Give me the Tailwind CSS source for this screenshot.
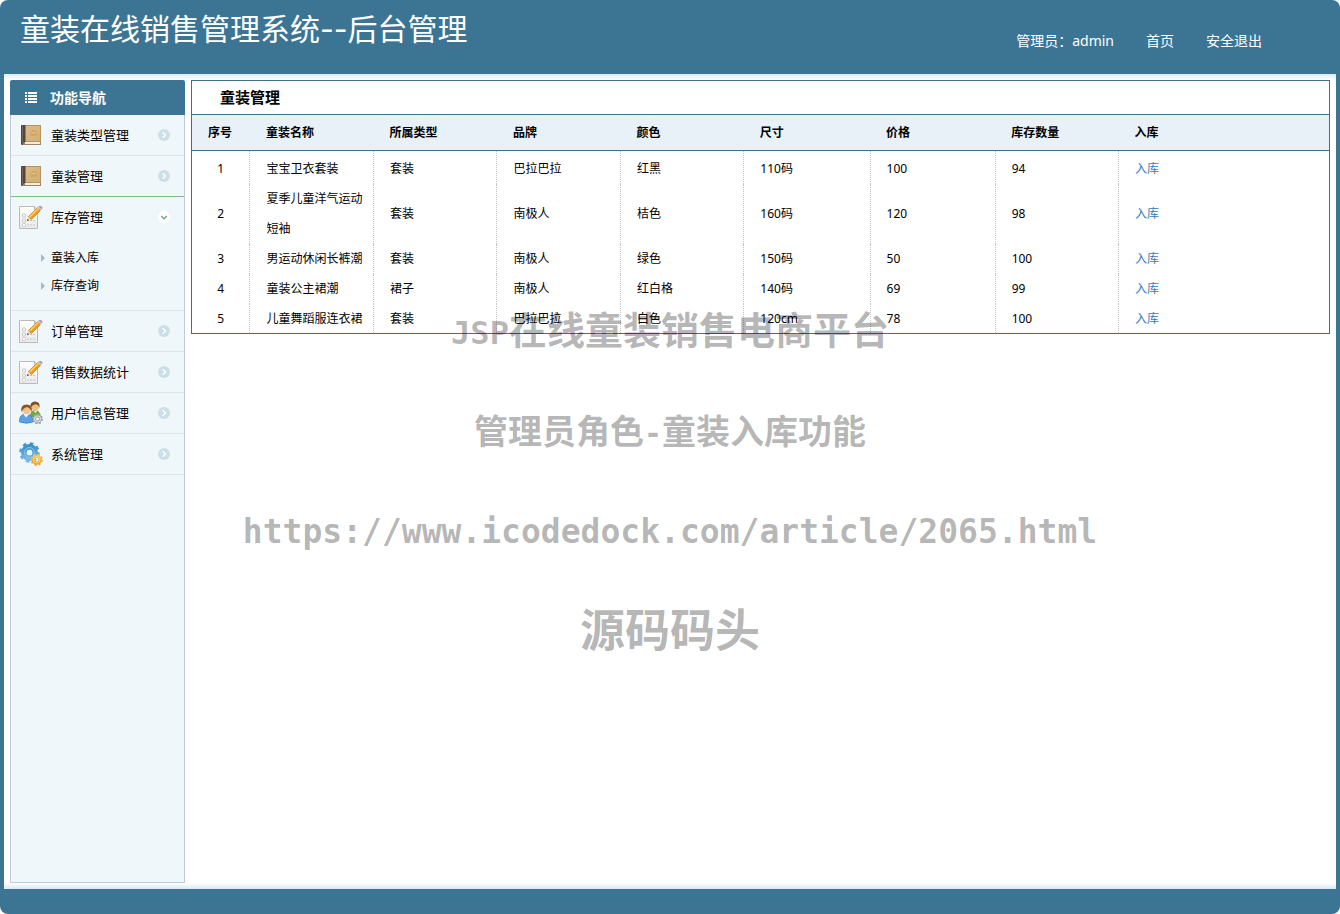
<!DOCTYPE html>
<html lang="zh-CN">
<head>
<meta charset="utf-8">
<title>童装在线销售管理系统--后台管理</title>
<script src="https://cdn.jsdelivr.net/npm/@tailwindcss/browser@4"></script>
</head>
<body class="relative bg-white font-['Noto_Sans','Noto_Sans_CJK_SC',sans-serif] text-black">
<svg class="absolute size-0" aria-hidden="true">
  <defs>
    <linearGradient id="cover" x1="0" y1="0" x2="1" y2="1"><stop offset="0" stop-color="#dcbd88"/><stop offset="1" stop-color="#d3ae76"/></linearGradient>
    <linearGradient id="paper" x1="0" y1="0" x2="0" y2="1"><stop offset="0" stop-color="#fff"/><stop offset="1" stop-color="#e9e9e9"/></linearGradient>
    <linearGradient id="blue" x1="0" y1="0" x2="0" y2="1"><stop offset="0" stop-color="#3f93cd"/><stop offset="1" stop-color="#74b6e4"/></linearGradient>
    <linearGradient id="gold" x1="0" y1="0" x2="0" y2="1"><stop offset="0" stop-color="#f7c250"/><stop offset="1" stop-color="#e9a02c"/></linearGradient>
  </defs>
  <symbol id="book" viewBox="0 0 24 24">
    <path d="M3 2h19v20H3z" fill="#9a8468"/>
    <path d="M6 18.500h15V21H6z" fill="#f1ebe0"/>
    <path d="M6 2h16v17H6z" fill="#b9935f"/>
    <path d="M6 3h15v15H6z" fill="url(#cover)"/>
    <path d="M2 3q0-1 1-1h3.500v17q-2 0-2.500 1l-.5 2H3q-1 0-1-1z" fill="#54473f"/>
    <path d="M3.500 3v17" stroke="#74645b"/>
    <path d="M11 9l2-2h3l2 1v4l-2 1h-4l-1-2z" fill="#d0a767"/><path d="M12 9l3 1 2-1" stroke="#e3c692" fill="none"/>
  </symbol>
  <symbol id="note" viewBox="0 0 24 24">
    <path d="M.5 1.500h15l3 3v19H.5z" fill="url(#paper)" stroke="#bababa"/>
    <path d="M15.500 1.500v3h3" fill="#ddd" stroke="#bababa"/>
    <g fill="#fff" stroke="#c2c2c2"><rect x="3.500" y="9" width="3" height="3" rx="1"/><rect x="3.500" y="14" width="3" height="3" rx="1"/><rect x="3.500" y="18.500" width="3" height="3" rx="1"/></g>
    <path d="M8 15.500h8M8 20h8" stroke="#c4c4c4" stroke-dasharray="2 1"/>
    <path d="M8 16l1.500-4.500 3 3z" fill="#f0d6a4"/><path d="M8 16l.6-2 1.400 1.300z" fill="#333"/>
    <path d="M9.500 11.500L18.500 2.500l3 3-9 9z" fill="#f09a1e" stroke="#b97618" stroke-width=".6"/>
    <path d="M10.500 12.200l9-9" stroke="#ffd468" stroke-width="1.400"/>
    <path d="M18.500 2.500l1-1 3 3-1 1z" fill="#c8c8ce"/><path d="M19.500 1.500q1.500-1.500 3.300 0 1.500 1.500-.3 3z" fill="#b697bd"/>
  </symbol>
  <symbol id="gear" viewBox="0 0 24 24">
    <circle cx="12" cy="12" r="9.800" fill="none" stroke-width="4" stroke-dasharray="3.850 3.847"/>
    <circle cx="12" cy="12" r="6.500" fill="none" stroke-width="6.500"/>
  </symbol>
  <symbol id="users" viewBox="0 0 24 24">
    <path d="M11 16q0-7 5-7t6 7z" fill="#71a842"/><path d="M14.500 9.500l2 2.500 2-2.500z" fill="#e8f1dc"/><circle cx="16" cy="5.500" r="4" fill="#efbd82"/><path d="M11.500 7q-1-6.500 4.500-6.500T20.500 7q-1-3.500-4-3.800Q13 4 11.500 7z" fill="#7b5123"/>
    <path d="M.5 21q-.5-8 6.500-8t7 8q-6 2.500-13.500 0z" fill="#5aa2e6" stroke="#2d70b6" stroke-width=".6"/><path d="M4.500 13l2.500 3.500 3-3.500z" fill="#fff"/>
    <circle cx="7.500" cy="9" r="4.300" fill="#f2c28a"/><path d="M2.500 11Q1 3.500 7.500 3.500T12.500 11q-1-4-4.500-5Q4 7 2.500 11z" fill="#8a5422"/>
    <svg x="13" y="12.500" width="11" height="11" stroke="#9da2a6"><use href="#gear"/></svg>
    <circle cx="18.500" cy="18" r="3" fill="none" stroke="#d9dcde" stroke-width="1.200"/>
  </symbol>
  <symbol id="gears" viewBox="0 0 24 24">
    <svg x="0" y="0" width="21" height="21" stroke="url(#blue)"><use href="#gear"/></svg>
    <circle cx="10.500" cy="10.500" r="5" fill="none" stroke="#8cc4ec" stroke-width="1"/>
    <svg x="11.500" y="11.500" width="12.500" height="12.500" stroke="url(#gold)"><use href="#gear"/></svg>
    <circle cx="17.750" cy="17.750" r="3.200" fill="none" stroke="#fbdb8b" stroke-width="1"/>
  </symbol>
  <symbol id="go" viewBox="0 0 12 12"><circle cx="6" cy="6" r="6" fill="#cbdfe9"/><path d="M4.700 3.200L7.500 6 4.700 8.800" fill="none" stroke="#fff" stroke-width="1.500"/></symbol>
  <symbol id="open" viewBox="0 0 12 12"><circle cx="6" cy="6" r="6" fill="#fff"/><path d="M3.200 5L6 7.800 8.800 5" fill="none" stroke="#6bb176" stroke-width="1.500"/></symbol>
</svg>

<div class="flex min-h-screen flex-col overflow-hidden rounded-lg bg-[#3c7593]">
  <header class="flex h-[74px] items-start justify-between pr-[78px] pl-5 text-white">
    <h1 class="pt-[9px] text-[30px] leading-10">童装在线销售管理系统<span class="font-[Inter]">--</span>后台管理</h1>
    <nav class="flex gap-8 pt-[31px] text-sm leading-5">
      <span>管理员：admin</span><a href="#">首页</a><a href="#">安全退出</a>
    </nav>
  </header>

  <div class="mx-1 flex flex-1 bg-white">
    <div class="flex min-w-0 flex-1 gap-1.5 bg-[linear-gradient(#deebf4,#fff_6px,#fff_calc(100%-6px),#d8e9f1)] p-1.5">
      <aside class="flex w-[175px] shrink-0 flex-col">
        <h2 class="flex h-[35px] shrink-0 items-center rounded-t-xs bg-[#3c7593] pl-[15px] text-[14px] font-bold text-white">
          <svg class="mr-[13px] size-3" viewBox="0 0 12 12" fill="#fff"><path d="M0 0h2v2H0zM3 0h9v2H3zM0 3h2v2H0zM3 3h9v2H3zM0 6h2v2H0zM3 6h9v2H3zM0 9h2v2H0zM3 9h9v2H3z"/></svg>功能导航
        </h2>
        <ul class="flex-1 border border-t-0 border-[#bccdd9] bg-[#f0f7fb] text-[13px] leading-5">
          <li class="border-b border-[#d8e5ed]"><a href="#" class="flex h-10 items-center pr-3.5 pl-2"><svg class="mr-2 size-6"><use href="#book"/></svg><span class="flex-1">童装类型管理</span><svg class="size-3"><use href="#go"/></svg></a></li>
          <li class="border-b border-[#7fb98a]"><a href="#" class="flex h-10 items-center pr-3.5 pl-2"><svg class="mr-2 size-6"><use href="#book"/></svg><span class="flex-1">童装管理</span><svg class="size-3"><use href="#go"/></svg></a></li>
          <li class="border-b border-[#d8e5ed]">
            <a href="#" class="flex h-10 items-center pr-3.5 pl-2"><svg class="mr-2 size-6"><use href="#note"/></svg><span class="flex-1">库存管理</span><svg class="size-3"><use href="#open"/></svg></a>
            <ul class="pt-[7px] pb-2.5 text-xs">
              <li><a href="#" class="flex h-7 items-center pl-[30px]"><svg class="mr-1.5 h-2 w-1" viewBox="0 0 4 8"><path d="M0 0l4 4-4 4z" fill="#a3bac8"/></svg>童装入库</a></li>
              <li><a href="#" class="flex h-7 items-center pl-[30px]"><svg class="mr-1.5 h-2 w-1" viewBox="0 0 4 8"><path d="M0 0l4 4-4 4z" fill="#a3bac8"/></svg>库存查询</a></li>
            </ul>
          </li>
          <li class="border-b border-[#d8e5ed]"><a href="#" class="flex h-10 items-center pr-3.5 pl-2"><svg class="mr-2 size-6"><use href="#note"/></svg><span class="flex-1">订单管理</span><svg class="size-3"><use href="#go"/></svg></a></li>
          <li class="border-b border-[#d8e5ed]"><a href="#" class="flex h-10 items-center pr-3.5 pl-2"><svg class="mr-2 size-6"><use href="#note"/></svg><span class="flex-1">销售数据统计</span><svg class="size-3"><use href="#go"/></svg></a></li>
          <li class="border-b border-[#d8e5ed]"><a href="#" class="flex h-10 items-center pr-3.5 pl-2"><svg class="mr-2 size-6"><use href="#users"/></svg><span class="flex-1">用户信息管理</span><svg class="size-3"><use href="#go"/></svg></a></li>
          <li class="border-b border-[#d8e5ed]"><a href="#" class="flex h-10 items-center pr-3.5 pl-2"><svg class="mr-2 size-6"><use href="#gears"/></svg><span class="flex-1">系统管理</span><svg class="size-3"><use href="#go"/></svg></a></li>
        </ul>
      </aside>

      <main class="min-w-0 flex-1">
        <section class="border border-[#3f6f89] bg-white">
          <h2 class="pl-7 text-[15px] leading-[33px] font-bold">童装管理</h2>
          <table class="w-full table-fixed text-left text-xs [&_td]:px-4 [&_td]:pr-2 [&_td]:leading-[30px] [&_tr:last-child>td]:leading-[29px] [&_td:first-child]:px-0 [&_td:first-child]:text-center [&_td:not(:last-child)]:border-r [&_td:not(:last-child)]:border-dotted [&_td:not(:last-child)]:border-[#c4c4c4] [&_tr:first-child>td]:pt-[3px] [&_th]:px-4">
            <colgroup><col class="w-[5.1%]"><col class="w-[10.86%]"><col class="w-[10.86%]"><col class="w-[10.86%]"><col class="w-[10.86%]"><col class="w-[11.1%]"><col class="w-[11%]"><col class="w-[10.86%]"><col></colgroup>
            <thead class="border-y border-[#3f6f89] bg-[#e8f0f8]">
              <tr class="h-9"><th>序号</th><th>童装名称</th><th>所属类型</th><th>品牌</th><th>颜色</th><th>尺寸</th><th>价格</th><th>库存数量</th><th>入库</th></tr>
            </thead>
            <tbody>
              <tr><td>1</td><td>宝宝卫衣套装</td><td>套装</td><td>巴拉巴拉</td><td>红黑</td><td>110码</td><td>100</td><td>94</td><td><a href="#" class="text-[#337ab7]">入库</a></td></tr>
              <tr><td>2</td><td>夏季儿童洋气运动短袖</td><td>套装</td><td>南极人</td><td>桔色</td><td>160码</td><td>120</td><td>98</td><td><a href="#" class="text-[#337ab7]">入库</a></td></tr>
              <tr><td>3</td><td>男运动休闲长裤潮</td><td>套装</td><td>南极人</td><td>绿色</td><td>150码</td><td>50</td><td>100</td><td><a href="#" class="text-[#337ab7]">入库</a></td></tr>
              <tr><td>4</td><td>童装公主裙潮</td><td>裙子</td><td>南极人</td><td>红白格</td><td>140码</td><td>69</td><td>99</td><td><a href="#" class="text-[#337ab7]">入库</a></td></tr>
              <tr><td>5</td><td>儿童舞蹈服连衣裙</td><td>套装</td><td>巴拉巴拉</td><td>白色</td><td>120cm</td><td>78</td><td>100</td><td><a href="#" class="text-[#337ab7]">入库</a></td></tr>
            </tbody>
          </table>
        </section>
      </main>
    </div>
  </div>
  <footer class="h-[25px]"></footer>
</div>

<div class="pointer-events-none absolute inset-x-0 top-[304px] flex flex-col items-center gap-12 text-center font-bold whitespace-nowrap text-black/30">
  <p class="text-[38px] leading-[50px]"><span class="font-['DejaVu_Sans_Mono'] text-[32px]">JSP</span>在线童装销售电商平台</p>
  <p class="text-[34px] leading-[50px]">管理员角色<span class="font-['DejaVu_Sans_Mono'] text-[30px]">-</span>童装入库功能</p>
  <p class="font-['DejaVu_Sans_Mono',monospace] text-[33px] leading-[50px]">https://www.icodedock.com/article/2065.html</p>
  <p class="text-[45px] leading-[50px]">源码码头</p>
</div>
</body>
</html>
